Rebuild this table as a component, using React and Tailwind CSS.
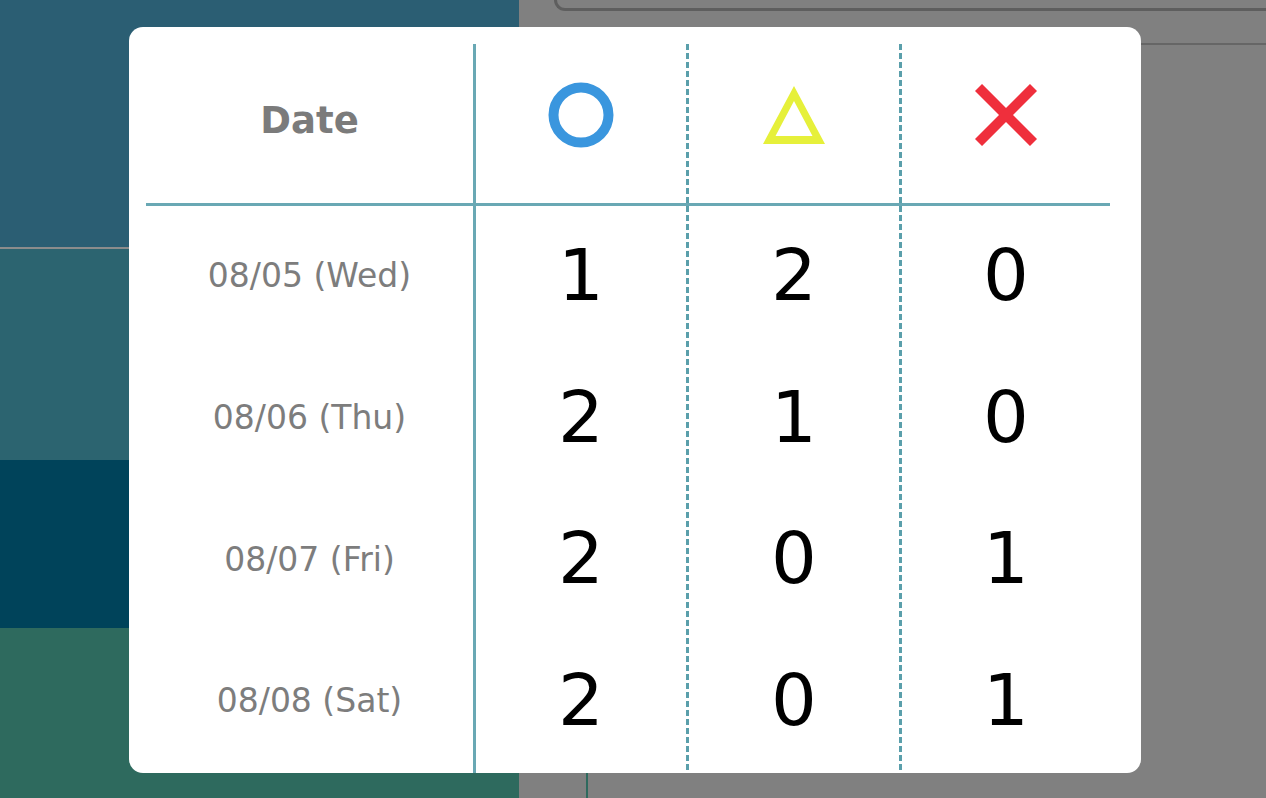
const rows = [
  { date: '08/05 (Wed)', ok: 1, maybe: 2, ng: 0 },
  { date: '08/06 (Thu)', ok: 2, maybe: 1, ng: 0 },
  { date: '08/07 (Fri)', ok: 2, maybe: 0, ng: 1 },
  { date: '08/08 (Sat)', ok: 2, maybe: 0, ng: 1 },
];

const font = { fontFamily: '"DejaVu Sans", Verdana, sans-serif' };

function Circle() {
  return (
    <svg width="66" height="66" viewBox="0 0 66 66">
      <circle cx="33" cy="33" r="27.5" fill="none" stroke="#3a96de" strokeWidth="10" />
    </svg>
  );
}

function Triangle() {
  return (
    <svg width="62" height="58" viewBox="0 0 62 58">
      <path
        d="M31 0 L62 58 L0 58 Z M31 15 L12.5 50 L49.5 50 Z"
        fill="#e6f03a"
        fillRule="evenodd"
      />
    </svg>
  );
}

function Cross() {
  return (
    <svg width="62" height="62" viewBox="0 0 62 62">
      <line x1="3.5" y1="3.5" x2="58.5" y2="58.5" stroke="#ef2f3c" strokeWidth="10" />
      <line x1="58.5" y1="3.5" x2="3.5" y2="58.5" stroke="#ef2f3c" strokeWidth="10" />
    </svg>
  );
}

// séparateur vertical : plein ou pointillé, avec le croisement de la ligne d'en-tête
function Divider({ dashed }) {
  const seg = dashed
    ? 'bg-[repeating-linear-gradient(to_bottom,#5a9fab_0_6px,transparent_6px_9px)]'
    : 'bg-[#69a8b4]';
  return (
    <div className="w-[3px] flex flex-col">
      <div className={`h-[159px] ${seg}`} />
      <div className="h-[3px] bg-[#69a8b4]" />
      <div className={`flex-1 ${seg}`} />
    </div>
  );
}

function Column({ width, header, values, headerClass = 'pb-[18px]' }) {
  return (
    <div className={`${width} flex flex-col`}>
      <div className={`h-[159px] flex items-center justify-center ${headerClass}`}>{header}</div>
      <div className="h-[3px] bg-[#69a8b4]" />
      {values.map((v, i) => (
        <div key={i} className="flex-1 flex items-center justify-center">
          {v}
        </div>
      ))}
    </div>
  );
}

function Num({ n }) {
  return <span className="text-[72px] leading-none text-black pb-[4px]">{n}</span>;
}

export default function App() {
  return (
    <div className="relative w-[1266px] h-[798px] overflow-hidden flex" style={font}>
      {/* fond : liste à gauche, zone grise à droite */}
      <div className="w-[519px] flex flex-col">
        <div className="h-[247px] bg-[#2b5e73]" />
        <div className="h-[2px] bg-[#8c8c8c]" />
        <div className="h-[211px] bg-[#2c6470]" />
        <div className="h-[168px] bg-[#00435a]" />
        <div className="flex-1 bg-[#2e6a5e]" />
      </div>
      <div className="flex-1 bg-[#808080] flex flex-col">
        <div className="ml-[35px] h-[11px] border-l-[3px] border-b-[3px] border-[#5e5e5e] rounded-bl-[14px]" />
        <div className="mt-[32px] h-[2px] bg-[#666666]" />
        <div className="flex-1" />
        <div className="ml-[67px] w-[2px] h-[25px] bg-[#2e6a5e]" />
      </div>

      {/* fenêtre modale */}
      <div className="absolute left-[129px] top-[27px] w-[1012px] h-[746px] bg-white rounded-[14px] pl-[17px] pt-[17px] flex">
        <div className="flex h-full">
          <Column
            width="w-[327px]"
            headerClass="pb-[6px]"
            header={<span className="text-[37px] font-bold text-[#7b7b7b]">Date</span>}
            values={rows.map((r) => (
              <span className="text-[33px] text-[#7d7d7d] pb-[2px]">{r.date}</span>
            ))}
          />
          <Divider />
          <Column width="w-[210px]" header={<Circle />} values={rows.map((r) => <Num n={r.ok} />)} />
          <Divider dashed />
          <Column width="w-[210px]" header={<Triangle />} values={rows.map((r) => <Num n={r.maybe} />)} />
          <Divider dashed />
          <Column width="w-[208px]" header={<Cross />} values={rows.map((r) => <Num n={r.ng} />)} />
        </div>
      </div>
    </div>
  );
}
